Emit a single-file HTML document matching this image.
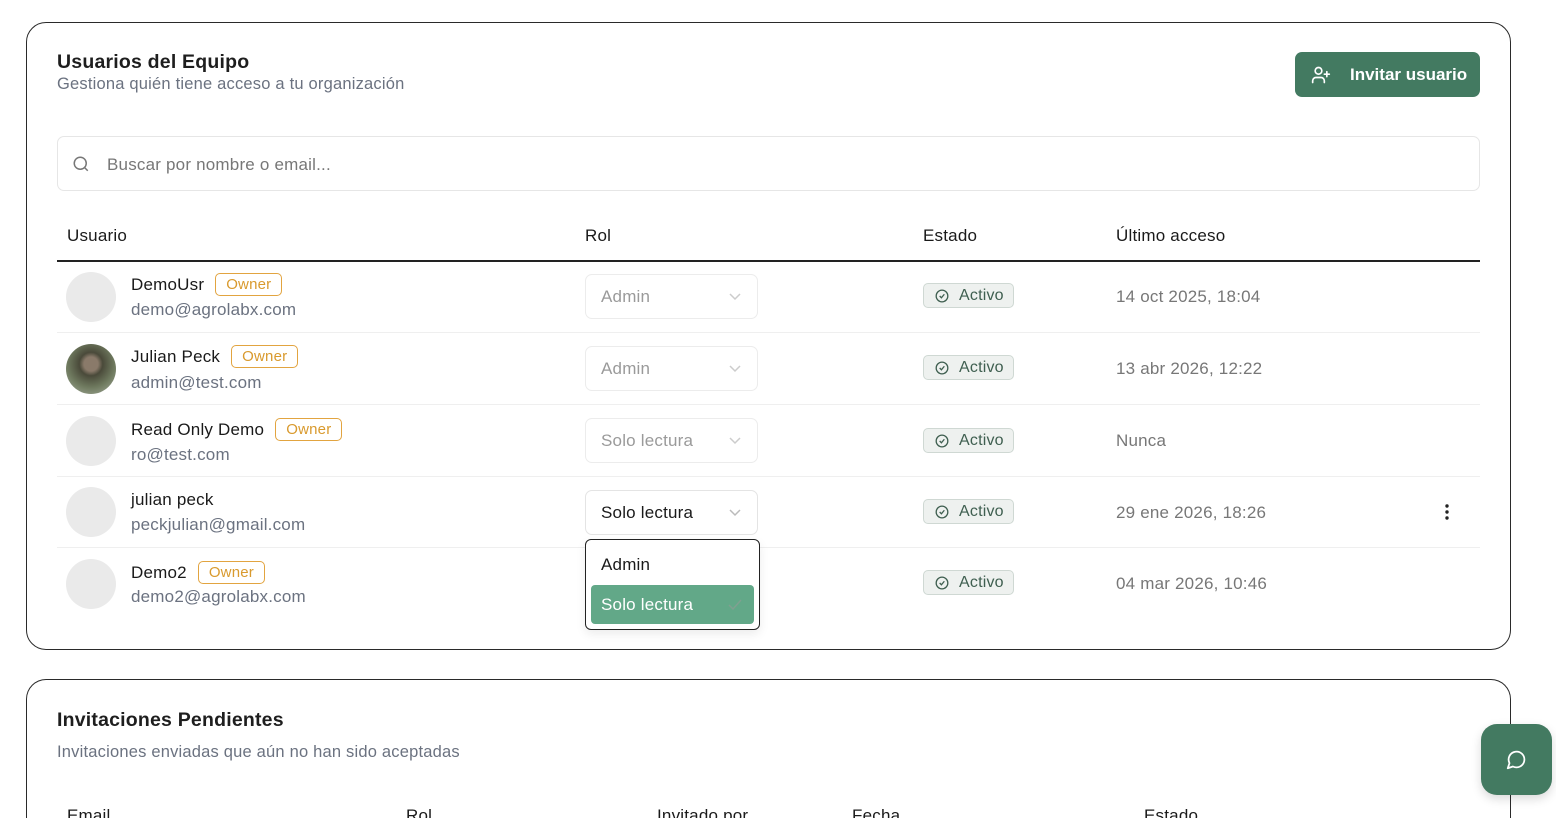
<!DOCTYPE html>
<html><head><meta charset="utf-8"><style>
*{box-sizing:border-box;margin:0;padding:0}
html,body{width:1556px;height:818px;overflow:hidden}
body{background:#fff;font-family:"Liberation Sans",sans-serif;color:#1a1a1a;position:relative;letter-spacing:.2px}
.card{position:absolute;left:26px;width:1485px;border:1.5px solid #2a2a2a;border-radius:20px;background:#fff}
.abs{position:absolute}
.t{font-size:17px}
.g{color:#6b7280}
.sel{position:absolute;left:585px;width:173px;height:45px;border:1px solid #ececec;border-radius:7px;font-size:17px;padding:0 15px;line-height:43px;color:#9a9a9a}
.sel svg{position:absolute;right:16px;top:18px}
.badge{position:absolute;left:923px;width:91px;height:25px;border:1px solid #cfd8d3;background:#eef1ef;border-radius:5px;font-size:16px;color:#3f5f50;line-height:23px;padding-left:35px}
.badge svg{position:absolute;left:11px;top:5px}
.av{position:absolute;left:66px;width:50px;height:50px;border-radius:50%;background:#eaeaea}
.own{display:inline-block;border:1px solid #e2a440;color:#d99a2e;border-radius:5px;font-size:15px;padding:2px 10px;margin-left:11px;vertical-align:1px}
.row{position:absolute;left:57px;width:1423px;border-bottom:1px solid #efefef}
.date{position:absolute;left:1116px;font-size:17px;color:#777}
</style></head><body>
<div class="card" style="top:22px;height:628px"></div>
<div class="abs" style="left:57px;top:51px;font-size:19.5px;font-weight:bold;color:#1e1e1e">Usuarios del Equipo</div>
<div class="abs g" style="left:57px;top:75px;font-size:16.5px">Gestiona quién tiene acceso a tu organización</div>
<div class="abs" style="left:1295px;top:52px;width:185px;height:45px;background:#437a61;border-radius:7px;color:#fff;font-size:17px;font-weight:bold;line-height:45px;padding-left:55px;letter-spacing:0">Invitar usuario
<svg class="abs" style="left:16px;top:13px" width="20" height="20" viewBox="0 0 24 24" fill="none" stroke="#fff" stroke-width="2" stroke-linecap="round"><circle cx="9" cy="7" r="4"/><path d="M2 21v-2a4 4 0 0 1 4-4h6a4 4 0 0 1 4 4v2M19 8v6M22 11h-6"/></svg></div>
<div class="abs" style="left:57px;top:136px;width:1423px;height:55px;border:1px solid #e6e6e6;border-radius:7px"></div>
<svg class="abs" style="left:72px;top:155px" width="18" height="18" viewBox="0 0 24 24" fill="none" stroke="#777" stroke-width="2"><circle cx="11" cy="11" r="8"/><path d="M21 21l-4.3-4.3"/></svg>
<div class="abs t" style="left:107px;top:155px;color:#777">Buscar por nombre o email...</div>
<div class="abs t" style="left:67px;top:226px">Usuario</div>
<div class="abs t" style="left:585px;top:226px">Rol</div>
<div class="abs t" style="left:923px;top:226px">Estado</div>
<div class="abs t" style="left:1116px;top:226px">Último acceso</div>
<div class="abs" style="left:57px;top:260px;width:1423px;height:1.5px;background:#222"></div>

<div class="row" style="top:261px;height:72px"></div>
<div class="row" style="top:333px;height:72px"></div>
<div class="row" style="top:405px;height:72px"></div>
<div class="row" style="top:477px;height:71px"></div>

<div class="av" style="top:272px"></div>
<div class="abs t" style="left:131px;top:273px">DemoUsr<span class="own">Owner</span></div>
<div class="abs t g" style="left:131px;top:300px">demo@agrolabx.com</div>
<div class="av" style="top:344px;background:radial-gradient(circle at 50% 40%,#8a7a6a 0 18%,#4a4a3a 30%,#6f7a5f 60%,#a8b0a0 100%)"></div>
<div class="abs t" style="left:131px;top:345px">Julian Peck<span class="own">Owner</span></div>
<div class="abs t g" style="left:131px;top:373px">admin@test.com</div>
<div class="av" style="top:416px"></div>
<div class="abs t" style="left:131px;top:418px">Read Only Demo<span class="own">Owner</span></div>
<div class="abs t g" style="left:131px;top:445px">ro@test.com</div>
<div class="av" style="top:487px"></div>
<div class="abs t" style="left:131px;top:490px">julian peck</div>
<div class="abs t g" style="left:131px;top:515px">peckjulian@gmail.com</div>
<div class="av" style="top:559px"></div>
<div class="abs t" style="left:131px;top:561px">Demo2<span class="own">Owner</span></div>
<div class="abs t g" style="left:131px;top:587px">demo2@agrolabx.com</div>

<div class="sel" style="top:274px">Admin<svg width="12" height="8" viewBox="0 0 12 8" fill="none" stroke="#ccc" stroke-width="1.5"><path d="M1 1l5 5 5-5"/></svg></div>
<div class="sel" style="top:346px">Admin<svg width="12" height="8" viewBox="0 0 12 8" fill="none" stroke="#ccc" stroke-width="1.5"><path d="M1 1l5 5 5-5"/></svg></div>
<div class="sel" style="top:418px">Solo lectura<svg width="12" height="8" viewBox="0 0 12 8" fill="none" stroke="#ccc" stroke-width="1.5"><path d="M1 1l5 5 5-5"/></svg></div>
<div class="sel" style="top:490px;color:#1a1a1a;border-color:#e4e4e4">Solo lectura<svg width="12" height="8" viewBox="0 0 12 8" fill="none" stroke="#bbb" stroke-width="1.5"><path d="M1 1l5 5 5-5"/></svg></div>

<div class="abs" style="left:585px;top:539px;width:175px;height:91px;border:1.5px solid #222;border-radius:6px;background:#fff;box-shadow:0 4px 10px rgba(0,0,0,.08)">
<div class="abs t" style="left:15px;top:15px">Admin</div>
<div class="abs" style="left:5px;top:45px;width:163px;height:39px;background:#62a888;border-radius:4px;color:#fff;font-size:17px;line-height:39px;padding-left:10px">Solo lectura
<svg class="abs" style="right:12px;top:14px" width="14" height="11" viewBox="0 0 14 11" fill="none" stroke="#7fa090" stroke-width="1.5"><path d="M1 6l4 4 8-9"/></svg></div></div>

<div class="badge" style="top:283px"><svg width="14" height="14" viewBox="0 0 24 24" fill="none" stroke="#3f5f50" stroke-width="2.2"><circle cx="12" cy="12" r="10"/><path d="M8 12l3 3 5-6"/></svg>Activo</div>
<div class="badge" style="top:355px"><svg width="14" height="14" viewBox="0 0 24 24" fill="none" stroke="#3f5f50" stroke-width="2.2"><circle cx="12" cy="12" r="10"/><path d="M8 12l3 3 5-6"/></svg>Activo</div>
<div class="badge" style="top:428px"><svg width="14" height="14" viewBox="0 0 24 24" fill="none" stroke="#3f5f50" stroke-width="2.2"><circle cx="12" cy="12" r="10"/><path d="M8 12l3 3 5-6"/></svg>Activo</div>
<div class="badge" style="top:499px"><svg width="14" height="14" viewBox="0 0 24 24" fill="none" stroke="#3f5f50" stroke-width="2.2"><circle cx="12" cy="12" r="10"/><path d="M8 12l3 3 5-6"/></svg>Activo</div>
<div class="badge" style="top:570px"><svg width="14" height="14" viewBox="0 0 24 24" fill="none" stroke="#3f5f50" stroke-width="2.2"><circle cx="12" cy="12" r="10"/><path d="M8 12l3 3 5-6"/></svg>Activo</div>

<div class="date" style="top:287px">14 oct 2025, 18:04</div>
<div class="date" style="top:359px">13 abr 2026, 12:22</div>
<div class="date" style="top:431px">Nunca</div>
<div class="date" style="top:503px">29 ene 2026, 18:26</div>
<div class="date" style="top:574px">04 mar 2026, 10:46</div>
<svg class="abs" style="left:1444px;top:503px" width="6" height="18" viewBox="0 0 6 18" fill="#222"><circle cx="3" cy="3" r="1.7"/><circle cx="3" cy="9" r="1.7"/><circle cx="3" cy="15" r="1.7"/></svg>

<div class="card" style="top:679px;height:139px;border-bottom:none;border-radius:20px 20px 0 0"></div>
<div class="abs" style="left:57px;top:709px;font-size:19.5px;font-weight:bold;color:#1e1e1e">Invitaciones Pendientes</div>
<div class="abs g" style="left:57px;top:743px;font-size:16.5px">Invitaciones enviadas que aún no han sido aceptadas</div>
<div class="abs t" style="left:67px;top:806px">Email</div>
<div class="abs t" style="left:406px;top:806px">Rol</div>
<div class="abs t" style="left:657px;top:806px">Invitado por</div>
<div class="abs t" style="left:852px;top:806px">Fecha</div>
<div class="abs t" style="left:1144px;top:806px">Estado</div>

<div class="abs" style="left:1481px;top:724px;width:71px;height:71px;background:#437a61;border-radius:16px;box-shadow:0 4px 10px rgba(0,0,0,.15)">
<svg class="abs" style="left:25px;top:25px" width="21" height="21" viewBox="0 0 24 24" fill="none" stroke="#fff" stroke-width="2" stroke-linejoin="round"><path d="M7.9 20A9 9 0 1 0 4 16.1L2 22z"/></svg></div>
</body></html>
